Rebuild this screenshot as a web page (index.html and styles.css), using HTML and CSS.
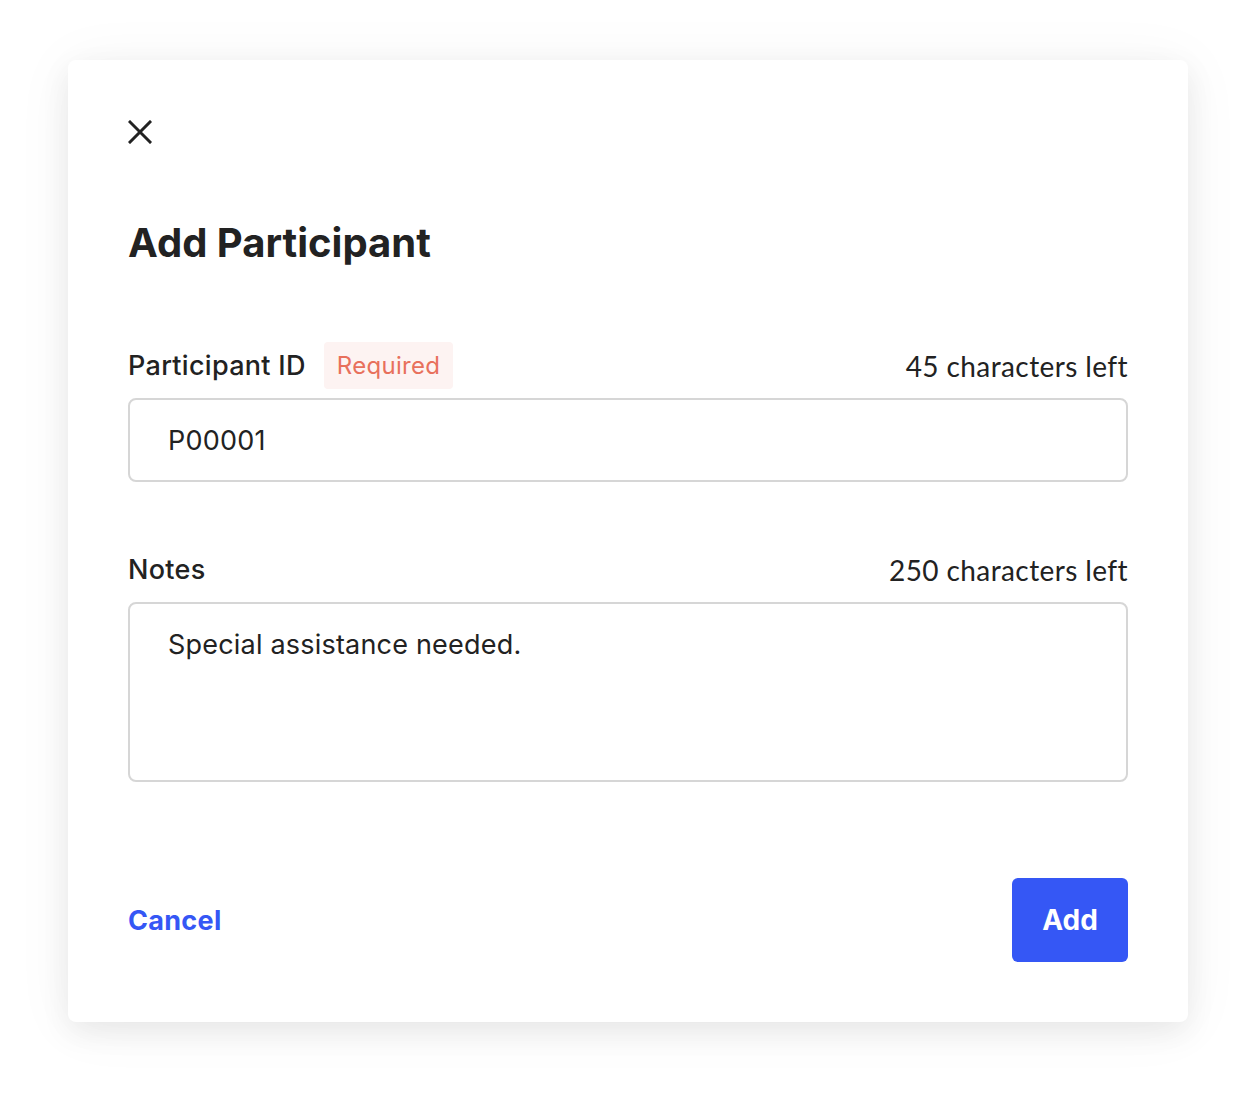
FILE: index.html
```html
<!DOCTYPE html>
<html lang="en">
<head>
    <meta charset="UTF-8">
    <title>Add Participant</title>
    <link rel="stylesheet" href="styles.css">
</head>
<body>
    <div class="page">
        <div class="modal">
            <button class="close" aria-label="Close">
                <svg width="24" height="24" viewBox="0 0 24 24" fill="none" stroke="#222" stroke-width="3" stroke-linecap="square">
                    <path d="M2 2 L22 22 M22 2 L2 22"/>
                </svg>
            </button>

            <h1>Add Participant</h1>

            <!-- Participant ID -->
            <div class="field">
                <div class="field-head">
                    <label for="pid">Participant ID</label>
                    <span class="badge">Required</span>
                    <span class="count">45 characters left</span>
                </div>
                <input id="pid" class="input" type="text" value="P00001">
            </div>

            <!-- Notes -->
            <div class="field notes">
                <div class="field-head">
                    <label for="notes">Notes</label>
                    <span class="count">250 characters left</span>
                </div>
                <textarea id="notes" class="input area">Special assistance needed.</textarea>
            </div>

            <div class="actions">
                <a href="#" class="cancel">Cancel</a>
                <button class="add">Add</button>
            </div>
        </div>
    </div>
</body>
</html>
```

FILE: styles.css
```css
body {
    margin: 0;
    background: #fff;
    font-family: Inter, 'Noto Sans', sans-serif;
    color: #222;
}
.page {
    padding: 60px 68px 76px;
}
.modal {
    box-sizing: border-box;
    width: 1120px;
    height: 962px;
    padding: 60px;
    background: #fff;
    border-radius: 8px;
    box-shadow: 0 10px 30px rgba(0, 0, 0, 0.07), 0 4px 60px rgba(0, 0, 0, 0.05);
}
.close {
    display: block;
    width: 24px;
    height: 24px;
    padding: 0;
    border: none;
    background: none;
    cursor: pointer;
}
.close svg {
    display: block;
}
h1 {
    font-size: 40px;
    font-weight: 700;
    line-height: 48px;
    margin: 75px 0 75px;
}
.field-head {
    display: flex;
    align-items: center;
    height: 47px;
    margin-bottom: 9px;
    font-size: 27px;
}
.field-head label {
    font-weight: 500;
    letter-spacing: 0.3px;
}
.badge {
    margin-left: 18px;
    padding: 0 13px;
    height: 47px;
    line-height: 47px;
    background: #fdf3f2;
    color: #e8705c;
    border-radius: 4px;
    font-size: 24px;
    letter-spacing: 0.3px;
}
.count {
    margin-left: auto;
    font-family: Lato, sans-serif;
    font-size: 28px;
    letter-spacing: 0.4px;
}
.input {
    display: block;
    box-sizing: border-box;
    width: 100%;
    height: 84px;
    padding: 0 38px;
    border: 2px solid #d6d6d6;
    border-radius: 8px;
    font-family: inherit;
    font-size: 27px;
    letter-spacing: 0.2px;
    color: #222;
    outline: none;
}
.notes {
    margin-top: 64px;
}
.area {
    height: 180px;
    padding-top: 24px;
    line-height: 34px;
    resize: none;
}
.actions {
    display: flex;
    justify-content: space-between;
    align-items: center;
    margin-top: 96px;
}
.cancel {
    color: #3557f5;
    font-size: 27px;
    font-weight: 700;
    letter-spacing: 0.3px;
    text-decoration: none;
}
.add {
    width: 116px;
    height: 84px;
    border: none;
    border-radius: 6px;
    background: #3557f5;
    color: #fff;
    font-family: inherit;
    font-size: 28px;
    font-weight: 700;
    cursor: pointer;
}
```
